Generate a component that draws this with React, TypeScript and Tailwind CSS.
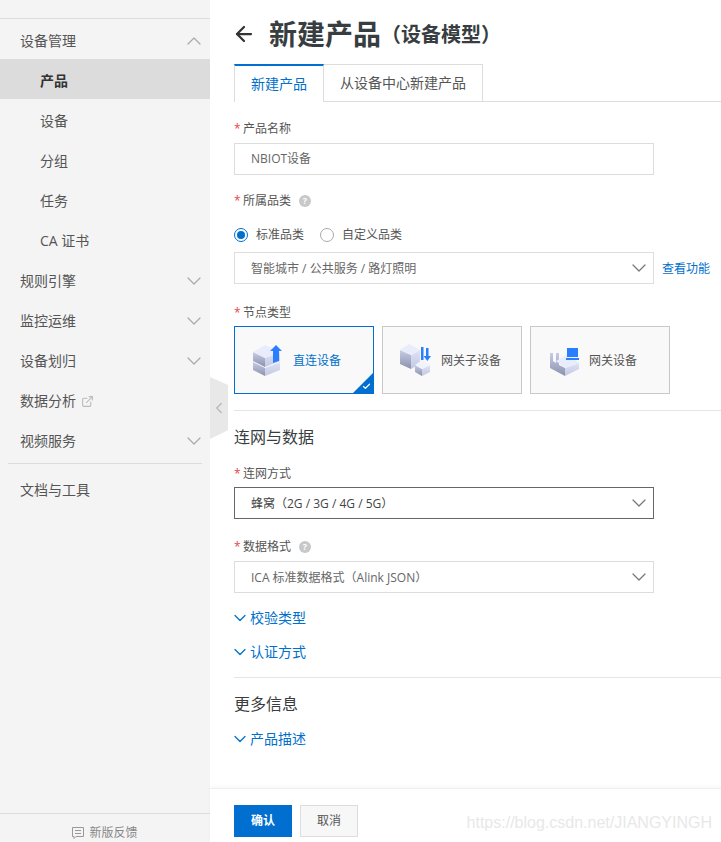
import { ArrowLeft, Check, ChevronDown, ChevronLeft, ChevronUp, ExternalLink } from "lucide-react";

const NavRow = ({ label, open }: { label: string; open?: boolean }) => (
  <div className="flex h-10 items-center justify-between pl-5 pr-1 pt-1 text-sm text-[#555]">
    <span>{label}</span>
    {open ? (
      <ChevronUp strokeWidth={1.25} className="h-6 w-6 text-[#aaa]" />
    ) : (
      <ChevronDown strokeWidth={1.25} className="h-6 w-6 text-[#aaa]" />
    )}
  </div>
);

const SubRow = ({ label, active }: { label: string; active?: boolean }) => (
  <div className={`flex h-10 items-center pl-10 pt-1 text-sm ${active ? "bg-[#dcdcdc] font-bold text-[#333]" : "text-[#555]"}`}>
    {label}
  </div>
);

const Help = () => (
  <span className="ml-2 flex h-3 w-3 items-center justify-center rounded-full bg-[#c8c8c8] text-[9px] font-bold text-white">?</span>
);

const Label = ({ text, help, className }: { text: string; help?: boolean; className: string }) => (
  <div className={`flex h-4 items-center text-xs text-[#555] ${className}`}>
    <span className="w-[9px] text-[#e5484d]">*</span>
    <span>{text}</span>
    {help && <Help />}
  </div>
);

const Select = ({ text, dark, className }: { text: string; dark?: boolean; className?: string }) => (
  <div className={`flex h-8 w-[420px] items-center justify-between border pl-4 pr-[2px] text-xs ${dark ? "border-[#666] text-[#444]" : "border-[#ddd] text-[#666]"} ${className ?? ""}`}>
    <span className="truncate pt-px">{text}</span>
    <ChevronDown strokeWidth={1.25} className="h-6 w-6 text-[#777]" />
  </div>
);

const FoldLink = ({ text, className }: { text: string; className: string }) => (
  <div className={`flex h-5 items-center text-sm text-[#0070cc] ${className}`}>
    <ChevronDown strokeWidth={1.5} className="-ml-1 h-5 w-5" />
    <span>{text}</span>
  </div>
);

const Shades = () => (
  <defs>
    <linearGradient id="side" x1="0" y1="0" x2="0" y2="1">
      <stop offset="0" stopColor="#c8cde6" />
      <stop offset="1" stopColor="#8b90ac" />
    </linearGradient>
    <linearGradient id="front" x1="0" y1="0" x2="0" y2="1">
      <stop offset="0" stopColor="#dfe3f6" />
      <stop offset="1" stopColor="#c2c8e4" />
    </linearGradient>
  </defs>
);

const DirectIcon = () => (
  <svg viewBox="0 0 32 32" className="h-8 w-8 shrink-0">
    <Shades />
    <path d="M1 18l12 6v8L1 26z" fill="url(#side)" />
    <path d="M13 24l15-6v8l-15 6z" fill="url(#front)" />
    <path d="M1 8l12 6v9L1 17z" fill="url(#side)" />
    <path d="M13 14l15-6v9l-15 6z" fill="url(#front)" />
    <path d="M1 8l12-7 15 7-15 6z" fill="#e9ecfa" />
    <path d="M24 1l6 6h-3v10l-6 2V7h-3z" fill="#2a7fff" />
  </svg>
);

const SubDeviceIcon = () => (
  <svg viewBox="0 0 32 32" className="h-8 w-8 shrink-0">
    <Shades />
    <path d="M0 6l11 5v14L0 20z" fill="url(#side)" />
    <path d="M11 11l9-5v14l-9 5z" fill="url(#front)" />
    <path d="M0 6l9-6 11 6-9 5z" fill="#e9ecfa" />
    <path d="M15 21l7 4v7l-7-4z" fill="url(#side)" />
    <path d="M22 25l8-4v7l-8 4z" fill="url(#front)" />
    <path d="M15 21l7-5 8 5-8 4z" fill="#f0f2fc" />
    <path d="M21 3h2.5v13H21zM26 4h2.5v8h2.5l-3.7 5-3.7-5H26z" fill="#2a7fff" />
  </svg>
);

const GatewayIcon = () => (
  <svg viewBox="0 0 32 32" className="h-8 w-8 shrink-0">
    <Shades />
    <path d="M2 9h3v8l3 2V9h3v12l6 3v8L2 24z" fill="url(#side)" />
    <path d="M17 24l14-5v6l-14 7z" fill="url(#front)" />
    <path d="M8 17l12-7 11 9-14 5z" fill="#e9ecfa" />
    <rect x="19" y="4" width="11" height="9" fill="#2a7fff" />
    <rect x="18" y="14" width="13" height="2" fill="#2a7fff" />
  </svg>
);

const NodeCard = ({ label, active, icon }: { label: string; active?: boolean; icon: React.ReactNode }) => (
  <div className={`relative flex h-[68px] w-[140px] items-center gap-[9px] border bg-[#f9f9f9] pl-[17px] text-xs ${active ? "border-[#006fd0] text-[#0070cc]" : "border-[#c8c8c8] text-[#555]"}`}>
    {icon}
    <span className="pt-px">{label}</span>
    {active && (
      <span className="absolute bottom-0 right-0 h-5 w-5 bg-[#006fd0] [clip-path:polygon(100%_0,100%_100%,0_100%)]">
        <Check strokeWidth={3.5} className="absolute bottom-[2px] right-[2px] h-[9px] w-[9px] text-white" />
      </span>
    )}
  </div>
);

export default function App() {
  return (
    <div className="relative flex h-[842px] w-[721px] overflow-hidden bg-white font-['Open_Sans','Noto_Sans_CJK_SC',sans-serif]">
      <aside className="flex w-[210px] shrink-0 flex-col bg-[#f4f4f4]">
        <div className="mt-[18px] flex-1 border-t border-[#ddd]">
          <NavRow label="设备管理" open />
          <SubRow label="产品" active />
          <SubRow label="设备" />
          <SubRow label="分组" />
          <SubRow label="任务" />
          <SubRow label="CA 证书" />
          <NavRow label="规则引擎" />
          <NavRow label="监控运维" />
          <NavRow label="设备划归" />
          <div className="flex h-10 items-center pl-5 pt-1 text-sm text-[#555]">
            数据分析
            <ExternalLink strokeWidth={2} className="ml-[5px] h-[13px] w-[13px] text-[#bbb]" />
          </div>
          <NavRow label="视频服务" />
          <div className="mx-2 mt-1 border-t border-[#ddd]" />
          <div className="flex h-[52px] items-center pl-5 text-sm text-[#555]">文档与工具</div>
        </div>
        <div className="flex h-[29px] items-center justify-center gap-[5px] border-t border-[#ddd] pt-[10px] text-xs text-[#888]">
          <svg viewBox="0 0 12 12" className="h-3 w-3" fill="none" stroke="#999">
            <path d="M.5.5h11v9H4l-2 2v-2H.5zM3 3.5h6M3 6.5h6" />
          </svg>
          新版反馈
        </div>
      </aside>

      <div className="absolute left-[210px] top-[377px] flex h-[62px] w-[18px] items-center justify-center bg-[#e8e8e8] [clip-path:polygon(0_0,100%_13%,100%_86%,0_100%)]">
        <ChevronLeft strokeWidth={2} className="h-[18px] w-[18px] text-[#bbb]" />
      </div>

      <main className="flex min-w-0 flex-1 flex-col">
        <div className="flex-1 pl-6">
          <div className="flex h-[64px] items-center pt-1">
            <ArrowLeft strokeWidth={2.25} className="-ml-[2px] h-6 w-6 text-[#333]" />
            <h1 className="ml-[13px] text-[28px] font-bold text-[#373d41]">新建产品</h1>
            <span className="pt-[2px] text-[20px] font-bold text-[#373d41]">（设备模型）</span>
          </div>

          <div className="flex h-[38px] border-b border-[#ddd] text-sm">
            <div className="flex h-[38px] w-[90px] items-center justify-center border-x border-[#ddd] border-t-2 border-t-[#006fd0] bg-white text-[#0070cc]">新建产品</div>
            <div className="flex h-[37px] w-[159px] items-center justify-center border-r border-t border-[#ddd] text-[#555]">从设备中心新建产品</div>
          </div>

          <Label text="产品名称" className="mt-[19px]" />
          <div className="mt-[6px] flex h-8 w-[420px] items-center border border-[#ddd] pl-4 text-xs text-[#666]">NBIOT设备</div>

          <Label text="所属品类" help className="mt-[18px]" />
          <div className="mt-[18px] flex h-4 items-center text-xs text-[#555]">
            <span className="flex h-[14px] w-[14px] items-center justify-center rounded-full border border-[#006fd0]">
              <span className="h-2 w-2 rounded-full bg-[#006fd0]" />
            </span>
            <span className="ml-2">标准品类</span>
            <span className="ml-4 h-[14px] w-[14px] rounded-full border border-[#aaa] bg-white" />
            <span className="ml-2">自定义品类</span>
          </div>
          <div className="mt-[9px] flex items-center">
            <Select text="智能城市 / 公共服务 / 路灯照明" />
            <span className="ml-2 pt-px text-xs text-[#0070cc]">查看功能</span>
          </div>

          <Label text="节点类型" className="mt-[21px]" />
          <div className="mt-[5px] flex gap-2">
            <NodeCard label="直连设备" active icon={<DirectIcon />} />
            <NodeCard label="网关子设备" icon={<SubDeviceIcon />} />
            <NodeCard label="网关设备" icon={<GatewayIcon />} />
          </div>

          <div className="mt-4 border-t border-[#e5e5e5]" />
          <h2 className="mt-4 h-[20px] text-base leading-5 text-[#373d41]">连网与数据</h2>

          <Label text="连网方式" className="mt-[19px]" />
          <Select text="蜂窝（2G / 3G / 4G / 5G）" dark className="mt-[5px]" />

          <Label text="数据格式" help className="mt-[20px]" />
          <Select text="ICA 标准数据格式（Alink JSON）" className="mt-[6px]" />

          <FoldLink text="校验类型" className="mt-[15px]" />
          <FoldLink text="认证方式" className="mt-[14px]" />

          <div className="mt-[15px] border-t border-[#e5e5e5]" />
          <h2 className="mt-4 h-[20px] text-base leading-5 text-[#373d41]">更多信息</h2>
          <FoldLink text="产品描述" className="mt-[15px]" />
        </div>

        <div className="flex h-[54px] items-start gap-2 border-t border-[#eee] pl-6 pt-4 shadow-[0_-2px_4px_rgba(0,0,0,0.03)]">
          <button className="h-8 w-[58px] bg-[#006fd0] text-xs font-bold text-white">确认</button>
          <button className="h-8 w-[58px] border border-[#ddd] bg-[#f7f7f7] text-xs text-[#555]">取消</button>
        </div>
      </main>

      <span className="absolute bottom-[9px] right-[9px] font-['Liberation_Sans',sans-serif] text-base leading-5 text-[#e8e8e8]">https://blog.csdn.net/JIANGYINGH</span>
    </div>
  );
}
